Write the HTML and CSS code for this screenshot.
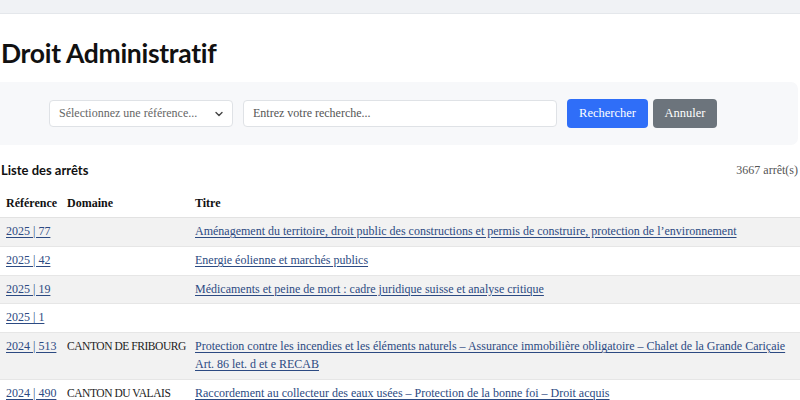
FILE: index.html
```html
<!DOCTYPE html>
<html lang="fr">
<head>
<meta charset="utf-8">
<title>Droit Administratif</title>
<link rel="stylesheet" href="styles.css">
</head>
<body>
<div class="topbar"></div>
<main class="page">
  <h1 class="title">Droit Administratif</h1>
  <form class="search">
    <div class="select">
      <span>Sélectionnez une référence...</span>
      <svg class="chev" width="10" height="10" viewBox="0 0 10 10"><path d="M2 3.5 L5 6.5 L8 3.5" fill="none" stroke="#444" stroke-width="1.4" stroke-linecap="round" stroke-linejoin="round"/></svg>
    </div>
    <div class="input">Entrez votre recherche...</div>
    <button type="button" class="btn btn-primary">Rechercher</button>
    <button type="button" class="btn btn-secondary">Annuler</button>
  </form>
  <div class="list-head">
    <h2 class="list-title">Liste des arrêts</h2>
    <span class="count">3667 arrêt(s)</span>
  </div>
  <table class="table">
    <colgroup><col class="c-ref"><col class="c-dom"><col></colgroup>
    <thead>
      <tr><th>Référence</th><th>Domaine</th><th>Titre</th></tr>
    </thead>
    <tbody>
      <tr><td><a href="#">2025 | 77</a></td><td></td><td><a href="#">Aménagement du territoire, droit public des constructions et permis de construire, protection de l’environnement</a></td></tr>
      <tr><td><a href="#">2025 | 42</a></td><td></td><td><a href="#">Energie éolienne et marchés publics</a></td></tr>
      <tr><td><a href="#">2025 | 19</a></td><td></td><td><a href="#">Médicaments et peine de mort : cadre juridique suisse et analyse critique</a></td></tr>
      <tr><td><a href="#">2025 | 1</a></td><td></td><td></td></tr>
      <tr><td><a href="#">2024 | 513</a></td><td class="dom">CANTON DE FRIBOURG</td><td><a href="#">Protection contre les incendies et les éléments naturels – Assurance immobilière obligatoire – Chalet de la Grande Cariçaie Art. 86 let. d et e RECAB</a></td></tr>
      <tr><td><a href="#">2024 | 490</a></td><td class="dom">CANTON DU VALAIS</td><td><a href="#">Raccordement au collecteur des eaux usées – Protection de la bonne foi – Droit acquis</a></td></tr>
    </tbody>
  </table>
</main>
</body>
</html>
```

FILE: styles.css
```css
* { box-sizing: border-box; }
html, body { margin: 0; padding: 0; background: #fff; }
body {
  font-family: "Liberation Serif", "Times New Roman", serif;
  font-size: 12px;
  color: #222;
  overflow: hidden;
}
.topbar {
  height: 14px;
  background: #f0f2f5;
  border-bottom: 1px solid #e4e7eb;
}
.title {
  font-family: Lato, "Noto Sans", sans-serif;
  font-weight: 700;
  font-size: 26.5px;
  letter-spacing: -0.3px;
  color: #111;
  margin: 23px 0 0 1px;
  line-height: 32px;
}
.search {
  margin: 13px 2px 0 0;
  height: 63px;
  background: #f7f8fa;
  border-radius: 0 7px 7px 0;
  display: flex;
  align-items: center;
  padding: 0 0 0 49px;
}
.select, .input {
  height: 27px;
  background: #fff;
  border: 1px solid #dfe2e6;
  border-radius: 4px;
  display: flex;
  align-items: center;
  padding: 0 9px;
  font-size: 12px;
}
.select {
  width: 184px;
  color: #666;
  justify-content: space-between;
  padding-right: 8px;
}
.input {
  width: 314px;
  margin-left: 10px;
  color: #555;
}
.btn {
  font-family: "Liberation Serif", "Times New Roman", serif;
  font-size: 12.5px;
  height: 29px;
  border: none;
  border-radius: 4px;
  color: #fff;
  cursor: pointer;
  padding: 0;
}
.btn-primary { background: #2f6ef8; width: 81px; margin-left: 10px; }
.btn-secondary { background: #6c747c; width: 64px; margin-left: 5px; }
.list-head {
  display: flex;
  justify-content: space-between;
  align-items: center;
  margin-top: 16px;
  height: 18px;
}
.list-title {
  font-family: Lato, "Noto Sans", sans-serif;
  font-weight: 700;
  font-size: 13px;
  margin: 0 0 0 1px;
  color: #111;
}
.count { color: #555; font-size: 12px; padding-right: 2px; }
.table {
  width: 100%;
  border-collapse: collapse;
  table-layout: fixed;
  margin-top: 10px;
}
.c-ref { width: 61px; }
.c-dom { width: 128px; }
.table th {
  text-align: left;
  font-weight: 700;
  font-size: 12px;
  padding: 5px 6px;
  line-height: 18px;
  border-bottom: 1px solid #e2e2e2;
  color: #111;
}
.table td {
  padding: 5px 6px;
  line-height: 17.75px;
  border-bottom: 1px solid #e6e6e6;
  vertical-align: top;
  color: #222;
}
.table td:last-child, .table th:last-child { padding-right: 2px; }
.table td:first-child, .dom { white-space: nowrap; }
.dom { font-size: 11.5px; letter-spacing: -0.45px; }
.table tbody tr:nth-child(odd) { background: #f2f2f2; }
.table a { color: #2c4a82; text-decoration: underline; text-underline-offset: 2px; text-decoration-thickness: 1px; }
```
